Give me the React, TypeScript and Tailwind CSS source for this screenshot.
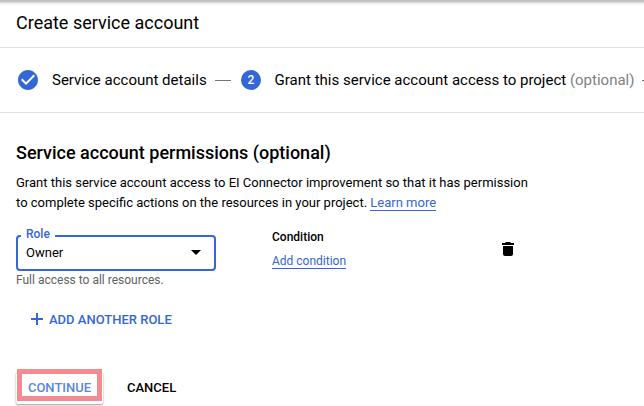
import type { ReactNode } from "react";

function TopBar() {
  return (
    <header className="h-12 border-b border-[#dfdfdf] bg-[linear-gradient(to_bottom,#bdbdbd_0px,#c6c6c6_2px,#ededed_3px,#ffffff_6px)] pl-4">
      <h1 className="pt-[11px] text-[18px] leading-6 whitespace-nowrap">Create service account</h1>
    </header>
  );
}

function Stepper() {
  return (
    <nav className="flex h-[65px] items-center overflow-hidden border-b border-[#dfdfdf] pl-4 text-[15px] leading-5 whitespace-nowrap">
      <svg className="size-6 shrink-0" viewBox="0 0 24 24" fill="#3367d6">
        <path d="M12 2C6.48 2 2 6.48 2 12s4.48 10 10 10 10-4.48 10-10S17.52 2 12 2zm-2 15l-5-5 1.41-1.41L10 14.17l7.59-7.59L19 8l-9 9z" />
      </svg>
      <span className="ml-3 w-[163px] shrink-0">Service account details</span>
      <span className="h-px w-4 shrink-0 bg-[#757575]" />
      <span className="ml-[10px] flex size-5 shrink-0 items-center justify-center rounded-full bg-[#3367d6] text-[12px] leading-none font-medium text-white">
        2
      </span>
      <span className="ml-[13.6px] w-[367.4px] shrink-0">
        Grant this service account access to project <span className="text-[#808080]">(optional)</span>
      </span>
      <span className="h-px w-4 shrink-0 bg-[#757575]" />
    </nav>
  );
}

function Link({ children }: { children: ReactNode }) {
  return (
    <a href="#" className="inline-block h-[15px] border-b border-[#3367d6] leading-[14px] text-[#3367d6]">
      {children}
    </a>
  );
}

function RoleRow() {
  return (
    <div className="flex h-[54px] items-start">
      <div className="w-[200px] shrink-0 pt-[6px]">
        <div className="relative h-9 rounded-[4px] border-2 border-[#3367d6]">
          <label className="absolute -top-[10px] left-[3px] bg-white px-[5px] text-[12px] leading-[14px] font-medium text-[#3367d6]">
            Role
          </label>
          <button className="flex h-full w-full items-center justify-between pr-[13px] pl-2 text-[13px]">
            <span>Owner</span>
            <svg className="mb-px h-[5px] w-[10px]" viewBox="0 0 10 5">
              <path d="M0 0h10L5 5z" fill="black" />
            </svg>
          </button>
        </div>
        <p className="mt-px text-[12px] leading-4 text-[#616161]">Full access to all resources.</p>
      </div>
      <div className="ml-14 w-[230px] shrink-0 text-[12px]">
        <div className="leading-4 font-medium">Condition</div>
        <div className="mt-[7px]">
          <Link>Add condition</Link>
        </div>
      </div>
      <button className="mt-[13px] shrink-0" aria-label="Delete role">
        <svg className="h-[14px] w-3" viewBox="0 0 12 14">
          <path d="M4 0h4l1 1h3v2H0V1h3zM1 4h10v8q0 2-2 2H3q-2 0-2-2z" fill="black" />
        </svg>
      </button>
    </div>
  );
}

export default function App() {
  return (
    <div className="h-[406px] w-[644px] overflow-hidden bg-white font-['Roboto',sans-serif] text-black">
      <TopBar />
      <Stepper />
      <main className="pl-4">
        <h2 className="pt-7 text-[18px] leading-6 font-medium">Service account permissions (optional)</h2>
        <p className="mt-2 h-10 text-[13px] leading-5 whitespace-nowrap">
          Grant this service account access to EI Connector improvement so that it has permission
          <br />
          to complete specific actions on the resources in your project. <Link>Learn more</Link>
        </p>
        <div className="pt-4">
          <RoleRow />
        </div>
        <button className="mt-[27px] ml-[15px] flex h-5 items-center text-[13px] leading-5 font-medium text-[#3367d6]">
          <svg className="mr-[6px] mb-[2px] size-3" viewBox="0 0 12 12">
            <path d="M5 0h2v5h5v2H7v5H5V7H0V5h5z" fill="#3367d6" />
          </svg>
          ADD ANOTHER ROLE
        </button>
        <div className="mt-[42px] flex items-center text-[13px] font-medium">
          <button className="relative h-8 w-[87px] rounded-[2px] bg-white text-[#5b85dc] shadow-[0_1px_2px_rgba(0,0,0,0.4)]">
            CONTINUE
            <span className="absolute -top-[3px] left-px h-8 w-[85px] border-5 border-[#f48b91]" />
          </button>
          <button className="ml-6">CANCEL</button>
        </div>
      </main>
    </div>
  );
}
